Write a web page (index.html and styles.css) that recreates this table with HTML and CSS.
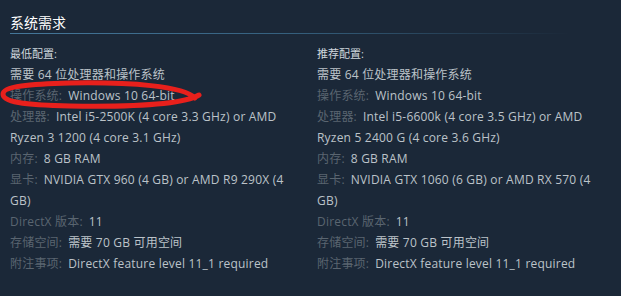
FILE: index.html
```html
<!DOCTYPE html>
<html lang="zh-CN">
<head>
<meta charset="utf-8">
<link rel="stylesheet" href="styles.css">
</head>
<body>
<div class="page">
  <h2 class="title">系统需求</h2>
  <div class="rule"></div>
  <div class="cols">
    <div class="col">
      <div class="head">最低配置:</div>
      <ul class="list">
        <li>需要 64 位处理器和操作系统</li>
        <li><span class="k">操作系统:</span>Windows 10 64-bit</li>
        <li><span class="k">处理器:</span>Intel i5-2500K (4 core 3.3 GHz) or AMD Ryzen 3 1200 (4 core 3.1 GHz)</li>
        <li><span class="k">内存:</span>8 GB RAM</li>
        <li><span class="k">显卡:</span>NVIDIA GTX 960 (4 GB) or AMD R9 290X (4 GB)</li>
        <li><span class="k">DirectX 版本:</span>11</li>
        <li><span class="k">存储空间:</span>需要 70 GB 可用空间</li>
        <li><span class="k">附注事项:</span>DirectX feature level 11_1 required</li>
      </ul>
    </div>
    <div class="col">
      <div class="head">推荐配置:</div>
      <ul class="list">
        <li>需要 64 位处理器和操作系统</li>
        <li><span class="k">操作系统:</span>Windows 10 64-bit</li>
        <li><span class="k">处理器:</span>Intel i5-6600k (4 core 3.5 GHz) or AMD Ryzen 5 2400 G (4 core 3.6 GHz)</li>
        <li><span class="k">内存:</span>8 GB RAM</li>
        <li><span class="k">显卡:</span>NVIDIA GTX 1060 (6 GB) or AMD RX 570 (4 GB)</li>
        <li><span class="k">DirectX 版本:</span>11</li>
        <li><span class="k">存储空间:</span>需要 70 GB 可用空间</li>
        <li><span class="k">附注事项:</span>DirectX feature level 11_1 required</li>
      </ul>
    </div>
  </div>
  <svg class="scribble" width="210" height="40" viewBox="0 76 210 40" aria-hidden="true">
    <path d="M195 98 C184 86 130 82 70 83 C30 84 3 86 3 94 C3 102 22 105 70 106 C130 107 182 105 199 95" fill="none" stroke="#e8201c" stroke-width="5" stroke-linecap="round" stroke-linejoin="round"/>
  </svg>
</div>
</body>
</html>
```
FILE: styles.css
```css
html, body {
  margin: 0;
  padding: 0;
  background: #1b2838;
}
body {
  width: 621px;
  height: 296px;
  overflow: hidden;
  font-family: "Open Sans", "Noto Sans CJK SC", sans-serif;
  font-size: 12px;
}
.page {
  position: relative;
  padding: 12px 0 0 10px;
}
.title {
  margin: 0;
  font-size: 14px;
  font-weight: normal;
  line-height: 20px;
  color: #ffffff;
  font-family: "Noto Sans CJK SC", sans-serif;
}
.rule {
  margin-top: 1px;
  height: 1px;
  width: 560px;
  background: linear-gradient(to right, #45779a 0%, #35607e 50%, #1b2838 100%);
}
.cols {
  display: grid;
  grid-template-columns: 290px 290px;
  column-gap: 17px;
  margin-top: 12px;
}
.head {
  font-size: 11px;
  line-height: 16px;
  color: #cfd7dd;
  margin-bottom: 2px;
}
.list {
  list-style: none;
  margin: 0;
  padding: 0;
}
.list li {
  line-height: 21px;
  letter-spacing: 0.2px;
  color: #bcc3c9;
}
.k {
  color: #5a6570;
  margin-right: 6px;
}
.scribble {
  position: absolute;
  left: 0;
  top: 76px;
}
```
